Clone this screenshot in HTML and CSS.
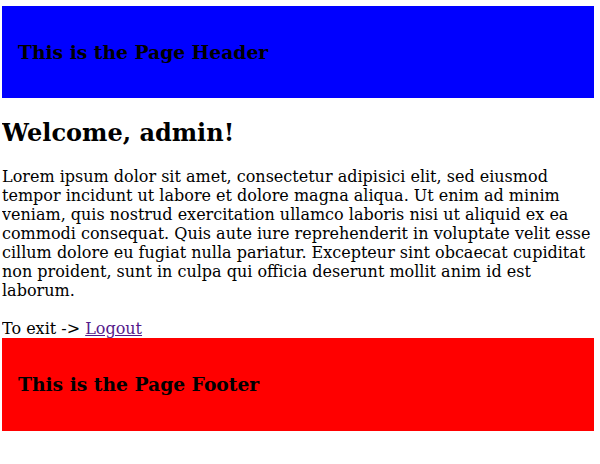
FILE: index.html
```html
<!DOCTYPE html>
<html lang="en">

<head>
    <meta charset="UTF-8">
    <meta name="viewport" content="width=device-width, initial-scale=1.0">
    <title>Welcome</title>
    <link rel="stylesheet" href="styles.css">
</head>

<body>

    <div class="header">
        <h3>This is the Page Header</h3>
    </div>

    <div class="content">
        <h2>Welcome, admin!</h2>
        <p>Lorem ipsum dolor sit amet, consectetur adipisici elit, sed eiusmod tempor incidunt ut labore et dolore
            magna aliqua. Ut enim ad minim veniam, quis nostrud exercitation ullamco laboris nisi ut aliquid ex ea
            commodi consequat. Quis aute iure reprehenderit in voluptate velit esse cillum dolore eu fugiat nulla
            pariatur. Excepteur sint obcaecat cupiditat non proident, sunt in culpa qui officia deserunt mollit anim
            id est laborum.</p>
        <div class="exit">To exit -&gt; <a href="#" class="logout">Logout</a></div>
    </div>

    <div class="footer">
        <h3>This is the Page Footer</h3>
    </div>

</body>

</html>
```

FILE: styles.css
```css
body {
    margin: 2px;
    font-family: "DejaVu Serif", serif;
    font-size: 16px;
    color: black;
}

.header,
.footer {
    margin-right: 4px;
    padding: 0 16px;
}

.header h3,
.footer h3 {
    margin: 0;
    padding: 35px 0;
    font-size: 18.72px;
}

.header {
    margin-top: 4px;
    background-color: blue;
}

.footer {
    background-color: red;
}

.footer h3 {
    padding-bottom: 36px;
}

.content h2 {
    font-size: 24px;
    margin: 20px 0;
}

.content p {
    margin: 16px 0 19px;
}

.logout {
    color: #551a8b;
}
```
